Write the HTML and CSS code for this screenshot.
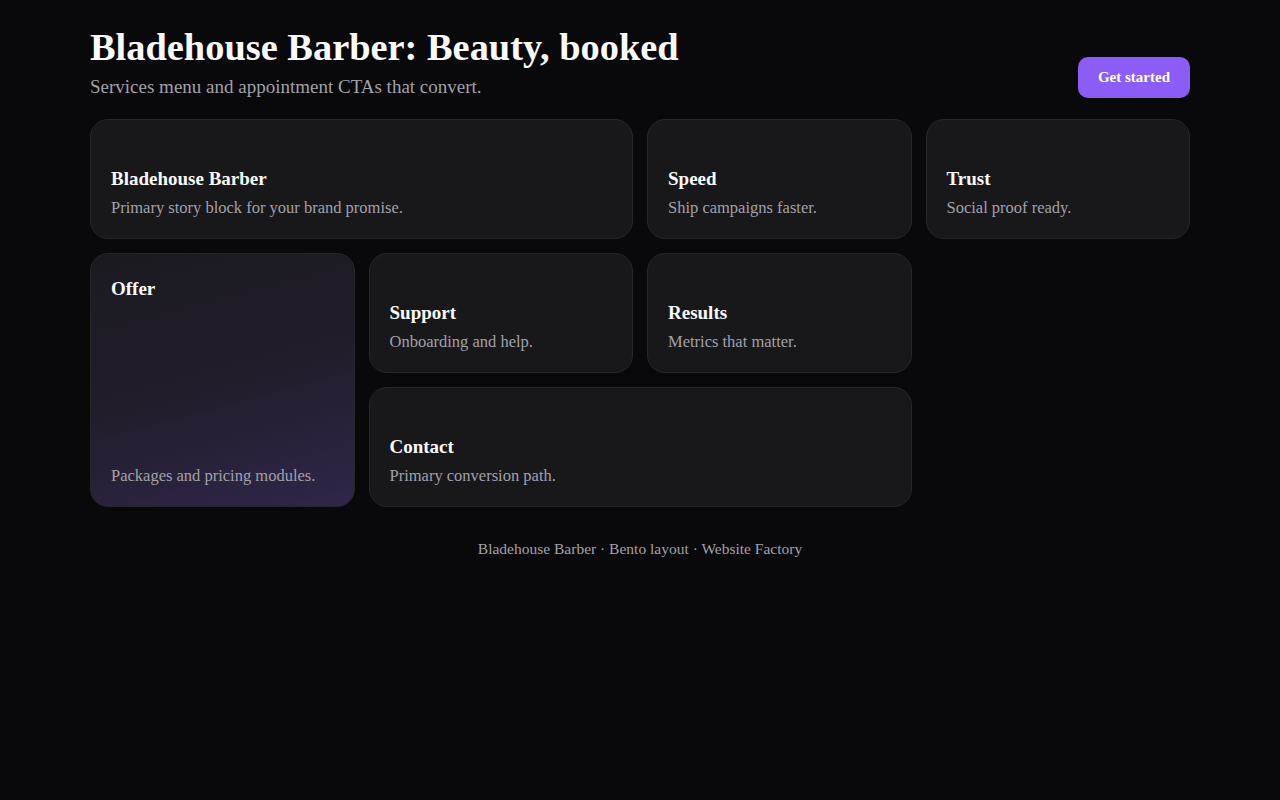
FILE: index.html
```html
<!DOCTYPE html>
<html lang="en">
<head>
  <meta charset="UTF-8">
  <meta name="viewport" content="width=device-width, initial-scale=1.0">
  <title>Bladehouse Barber</title>
  <link rel="stylesheet" href="styles.css">
</head>
<body>
  <div class="page">
    <header class="header">
      <div>
        <h1>Bladehouse Barber: Beauty, booked</h1>
        <p class="lead">Services menu and appointment CTAs that convert.</p>
      </div>
      <a class="button" href="#">Get started</a>
    </header>

    <div class="bento">
      <div class="card card-hero">
        <h3>Bladehouse Barber</h3>
        <p>Primary story block for your brand promise.</p>
      </div>
      <div class="card">
        <h3>Speed</h3>
        <p>Ship campaigns faster.</p>
      </div>
      <div class="card">
        <h3>Trust</h3>
        <p>Social proof ready.</p>
      </div>
      <div class="card card-offer">
        <h3>Offer</h3>
        <p>Packages and pricing modules.</p>
      </div>
      <div class="card">
        <h3>Support</h3>
        <p>Onboarding and help.</p>
      </div>
      <div class="card">
        <h3>Results</h3>
        <p>Metrics that matter.</p>
      </div>
      <div class="card card-contact">
        <h3>Contact</h3>
        <p>Primary conversion path.</p>
      </div>
    </div>

    <footer class="footer">Bladehouse Barber · Bento layout · Website Factory</footer>
  </div>
</body>
</html>
```

FILE: styles.css
```css
body {
  margin: 0;
  background: #09090b;
  color: #fafafa;
  font-family: 'Liberation Serif', 'DejaVu Serif', serif;
}
.page {
  max-width: 1100px;
  margin: 0 auto;
  padding: 24px 0 40px;
}
.header {
  display: flex;
  justify-content: space-between;
  align-items: flex-end;
  margin-bottom: 18px;
}
h1 {
  margin: 0;
  font-size: 38.4px;
  line-height: 47px;
  font-weight: 700;
}
.lead {
  margin: 3px 0 0;
  font-size: 19px;
  line-height: 1.4;
  color: #a1a1aa;
}
.button {
  display: inline-block;
  background: #8b5cf6;
  color: #fff;
  text-decoration: none;
  font-weight: 700;
  font-size: 15px;
  line-height: 17px;
  padding: 12px 20px;
  border-radius: 10px;
  margin-bottom: 3px;
}
.bento {
  display: grid;
  grid-template-columns: repeat(4, 1fr);
  grid-auto-rows: 120px;
  gap: 14px;
}
.card {
  background: #18181b;
  border: 1px solid #27272a;
  border-radius: 18px;
  padding: 20px 20px 18px;
  display: flex;
  flex-direction: column;
  justify-content: flex-end;
}
.card h3 {
  margin: 0 0 4px;
  font-size: 19px;
  line-height: 1.3;
  font-weight: 700;
}
.card p {
  margin: 0;
  font-size: 16.5px;
  line-height: 1.45;
  color: #a1a1aa;
}
.card-hero {
  grid-column: span 2;
}
.card-offer {
  grid-row: span 2;
  justify-content: space-between;
  padding-top: 23px;
  background: linear-gradient(165deg, #1b1a20 0%, #211d2b 50%, #30264a 100%);
}
.card-contact {
  grid-column: span 2;
}
.footer {
  margin-top: 33px;
  text-align: center;
  font-size: 15.5px;
  color: #a1a1aa;
}
```
